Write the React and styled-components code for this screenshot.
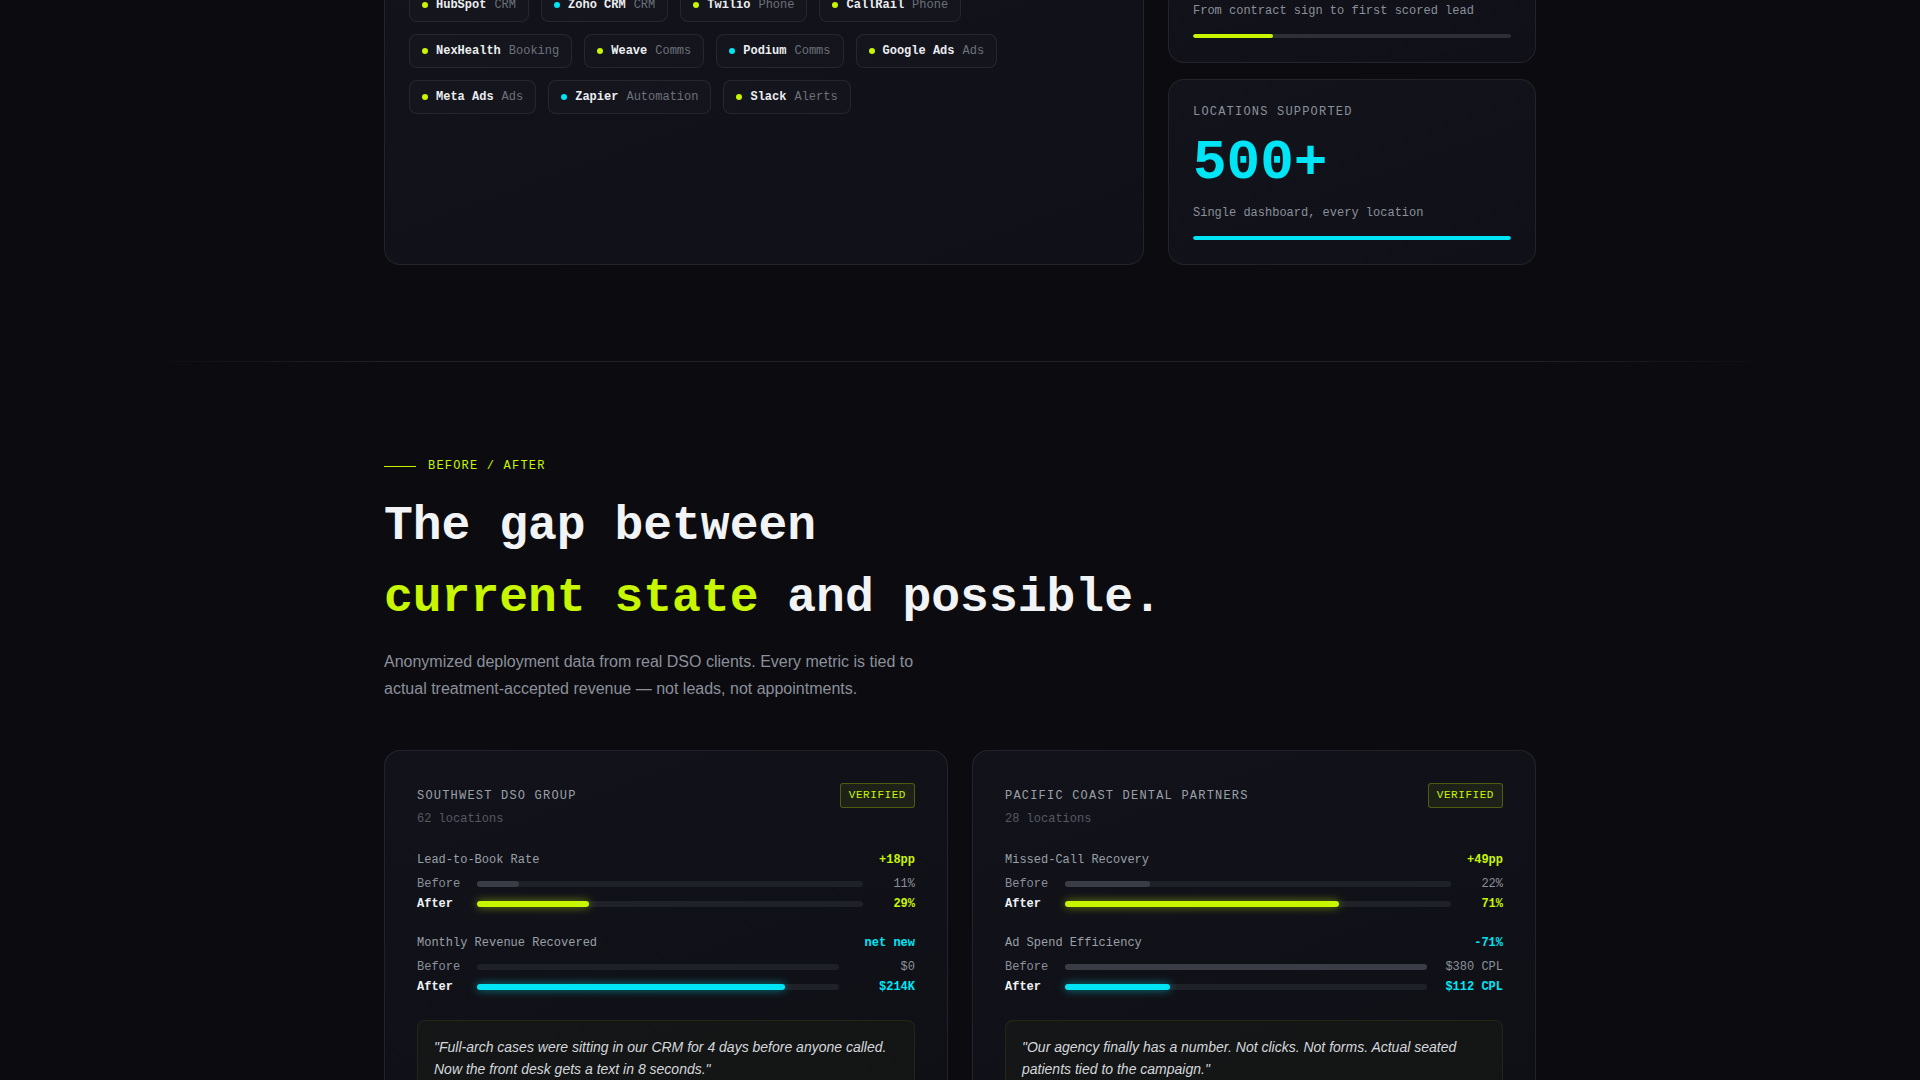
import React from "react";
import styled, { createGlobalStyle } from "styled-components";

const LIME = "#c8f500";
const CYAN = "#00e5f5";
const MONO = `"Liberation Mono", "DejaVu Sans Mono", monospace`;
const SANS = `"Liberation Sans", Arial, sans-serif`;

const tone = (t) => (t === "cyan" ? CYAN : LIME);

const GlobalStyle = createGlobalStyle`
  html, body {
    margin: 0;
    padding: 0;
    overflow: hidden;
    background: #0b0b10;
  }
  * { box-sizing: border-box; }
`;

const Page = styled.div`
  min-height: 100vh;
  background: #0b0b10;
  color: #e8eaee;
  font-family: ${MONO};
`;

const Section = styled.section`
  padding: ${(p) => p.$pad || "96px 0"};
  /* the capture is scrolled down the page: first section starts above the fold */
  margin-top: ${(p) => p.$offset || "0"};
`;

const Container = styled.div`
  max-width: 1152px;
  margin: 0 auto;
`;

/* ---------- integrations + stats ---------- */

const StackGrid = styled.div`
  display: grid;
  grid-template-columns: 1fr 368px;
  gap: 24px;
`;

const Panel = styled.div`
  background: linear-gradient(160deg, #12131b 0%, #101118 100%);
  border: 1px solid rgba(255, 255, 255, 0.08);
  border-radius: 16px;
  padding: 24px;
`;

const PanelLabel = styled.div`
  font-size: 12px;
  line-height: 16px;
  letter-spacing: 0.1em;
  text-transform: uppercase;
  color: #8b909a;
  margin-bottom: 12px;
`;

const PanelTitle = styled.h3`
  margin: 0 0 30px;
  font-size: 20px;
  line-height: 28px;
  color: #f0f2f5;
`;

const ChipList = styled.div`
  display: flex;
  flex-wrap: wrap;
  gap: 12px;
`;

const Chip = styled.div`
  display: flex;
  align-items: center;
  gap: 8px;
  padding: 7px 12px;
  border: 1px solid rgba(255, 255, 255, 0.08);
  border-radius: 8px;
  background: rgba(255, 255, 255, 0.015);
  font-size: 12px;
  line-height: 18px;
`;

const Dot = styled.span`
  width: 6px;
  height: 6px;
  border-radius: 50%;
  background: ${(p) => tone(p.$tone)};
`;

const ChipName = styled.span`
  font-weight: 700;
  color: #eceef1;
`;

const ChipKind = styled.span`
  color: #6c717a;
`;

const StatColumn = styled.div`
  display: flex;
  flex-direction: column;
  gap: 16px;
`;

const StatLabel = styled.div`
  font-size: 12px;
  line-height: 16px;
  letter-spacing: 0.1em;
  text-transform: uppercase;
  color: #8b909a;
  margin-bottom: 15px;
`;

const StatValue = styled.div`
  font-size: 56px;
  line-height: 1;
  font-weight: 700;
  color: ${(p) => tone(p.$tone)};
  margin-bottom: 14px;
`;

const StatNote = styled.div`
  font-size: 12px;
  line-height: 16px;
  color: #8b909a;
  margin-bottom: 15px;
`;

const Meter = styled.div`
  height: 4px;
  border-radius: 2px;
  background: rgba(255, 255, 255, 0.13);
  overflow: hidden;
`;

const MeterFill = styled.div`
  height: 100%;
  border-radius: 2px;
  background: ${(p) => tone(p.$tone)};
`;

/* ---------- divider ---------- */

const Divider = styled.div`
  max-width: 1640px;
  height: 1px;
  margin: 0 auto;
  background: linear-gradient(
    90deg,
    transparent 0%,
    rgba(255, 255, 255, 0.09) 15%,
    rgba(255, 255, 255, 0.09) 85%,
    transparent 100%
  );
`;

/* ---------- before / after ---------- */

const Eyebrow = styled.div`
  display: flex;
  align-items: center;
  gap: 12px;
  font-size: 12px;
  line-height: 14px;
  letter-spacing: 0.1em;
  text-transform: uppercase;
  color: ${LIME};
  margin-bottom: 17px;
`;

const EyebrowLine = styled.span`
  width: 32px;
  height: 1px;
  background: ${LIME};
`;

const Headline = styled.h2`
  margin: 0 0 14px;
  font-size: 48px;
  line-height: 72px;
  font-weight: 700;
  color: #f2f3f5;
`;

const Accent = styled.span`
  color: ${LIME};
`;

const Lead = styled.p`
  margin: 0 0 48px;
  max-width: 560px;
  font-family: ${SANS};
  font-size: 16px;
  line-height: 1.7;
  color: #8b909a;
`;

const CaseGrid = styled.div`
  display: grid;
  grid-template-columns: 1fr 1fr;
  gap: 24px;
`;

const CaseCard = styled.div`
  background: linear-gradient(160deg, #12131a 0%, #0f1016 100%);
  border: 1px solid rgba(255, 255, 255, 0.08);
  border-radius: 16px;
  padding: 32px;
`;

const CaseHeader = styled.div`
  display: flex;
  justify-content: space-between;
  align-items: center;
`;

const CaseName = styled.div`
  font-size: 12px;
  line-height: 18px;
  letter-spacing: 0.1em;
  text-transform: uppercase;
  color: #9ba0a8;
`;

const Badge = styled.span`
  padding: 4px 8px;
  font-size: 11px;
  line-height: 15px;
  letter-spacing: 0.05em;
  color: ${LIME};
  background: rgba(200, 245, 0, 0.07);
  border: 1px solid rgba(200, 245, 0, 0.28);
  border-radius: 3px;
`;

const CaseMeta = styled.div`
  margin-top: 2px;
  font-size: 12px;
  line-height: 18px;
  color: #545963;
`;

const Metrics = styled.div`
  display: flex;
  flex-direction: column;
  gap: 21px;
  margin-top: 23px;
`;

const MetricHead = styled.div`
  display: flex;
  justify-content: space-between;
  font-size: 12px;
  line-height: 18px;
  margin-bottom: 6px;
`;

const MetricName = styled.span`
  color: #9ba0a8;
`;

const MetricDelta = styled.span`
  font-weight: 700;
  color: ${(p) => tone(p.$tone)};
`;

const Rows = styled.div`
  display: flex;
  flex-direction: column;
  gap: 2px;
`;

const BarRow = styled.div`
  display: grid;
  grid-template-columns: 48px 1fr ${(p) => p.$valueWidth}px;
  gap: 12px;
  align-items: center;
  font-size: 12px;
  line-height: 18px;
`;

const RowLabel = styled.span`
  color: ${(p) => (p.$strong ? "#f0f2f5" : "#8b909a")};
  font-weight: ${(p) => (p.$strong ? 700 : 400)};
`;

const Track = styled.div`
  height: 6px;
  border-radius: 3px;
  background: #1f2128;
`;

const Fill = styled.div`
  height: 100%;
  border-radius: 3px;
  background: ${(p) => (p.$tone ? tone(p.$tone) : "#3a3d45")};
  box-shadow: ${(p) =>
    p.$tone === "cyan"
      ? "0 0 8px rgba(0, 229, 245, 0.55)"
      : p.$tone
      ? "0 0 8px rgba(200, 245, 0, 0.55)"
      : "none"};
`;

const RowValue = styled.span`
  text-align: right;
  white-space: nowrap;
  color: ${(p) => (p.$tone ? tone(p.$tone) : "#8b909a")};
  font-weight: ${(p) => (p.$tone ? 700 : 400)};
`;

const Quote = styled.blockquote`
  margin: 24px 0 0;
  padding: 16px 16px;
  background: rgba(200, 245, 0, 0.025);
  border: 1px solid rgba(200, 245, 0, 0.08);
  border-radius: 8px;
  font-family: ${SANS};
  font-style: italic;
  font-size: 14px;
  line-height: 1.55;
  color: #d4d7dc;
`;

const integrations = [
  ["HubSpot", "CRM", "lime"],
  ["Zoho CRM", "CRM", "cyan"],
  ["Twilio", "Phone", "lime"],
  ["CallRail", "Phone", "lime"],
  ["NexHealth", "Booking", "lime"],
  ["Weave", "Comms", "lime"],
  ["Podium", "Comms", "cyan"],
  ["Google Ads", "Ads", "lime"],
  ["Meta Ads", "Ads", "lime"],
  ["Zapier", "Automation", "cyan"],
  ["Slack", "Alerts", "lime"],
];

const stats = [
  {
    label: "Time to first lead",
    value: "14 days",
    note: "From contract sign to first scored lead",
    fill: 25,
    tone: "lime",
  },
  {
    label: "Locations supported",
    value: "500+",
    note: "Single dashboard, every location",
    fill: 100,
    tone: "cyan",
  },
];

const cases = [
  {
    name: "Southwest DSO Group",
    meta: "62 locations",
    quote:
      "\"Full-arch cases were sitting in our CRM for 4 days before anyone called. Now the front desk gets a text in 8 seconds.\"",
    metrics: [
      {
        name: "Lead-to-Book Rate",
        delta: "+18pp",
        tone: "lime",
        valueWidth: 40,
        before: { value: "11%", fill: 11 },
        after: { value: "29%", fill: 29 },
      },
      {
        name: "Monthly Revenue Recovered",
        delta: "net new",
        tone: "cyan",
        valueWidth: 64,
        before: { value: "$0", fill: 0 },
        after: { value: "$214K", fill: 85 },
      },
    ],
  },
  {
    name: "Pacific Coast Dental Partners",
    meta: "28 locations",
    quote:
      "\"Our agency finally has a number. Not clicks. Not forms. Actual seated patients tied to the campaign.\"",
    metrics: [
      {
        name: "Missed-Call Recovery",
        delta: "+49pp",
        tone: "lime",
        valueWidth: 40,
        before: { value: "22%", fill: 22 },
        after: { value: "71%", fill: 71 },
      },
      {
        name: "Ad Spend Efficiency",
        delta: "-71%",
        tone: "cyan",
        valueWidth: 64,
        before: { value: "$380 CPL", fill: 100 },
        after: { value: "$112 CPL", fill: 29 },
      },
    ],
  },
];

const Metric = ({ m }) => (
  <div>
    <MetricHead>
      <MetricName>{m.name}</MetricName>
      <MetricDelta $tone={m.tone}>{m.delta}</MetricDelta>
    </MetricHead>
    <Rows>
      <BarRow $valueWidth={m.valueWidth}>
        <RowLabel>Before</RowLabel>
        <Track>
          <Fill style={{ width: `${m.before.fill}%` }} />
        </Track>
        <RowValue>{m.before.value}</RowValue>
      </BarRow>
      <BarRow $valueWidth={m.valueWidth}>
        <RowLabel $strong>After</RowLabel>
        <Track>
          <Fill $tone={m.tone} style={{ width: `${m.after.fill}%` }} />
        </Track>
        <RowValue $tone={m.tone}>{m.after.value}</RowValue>
      </BarRow>
    </Rows>
  </div>
);

const App = () => {
  return (
    <Page>
      <GlobalStyle />

      <Section $pad="0 0 96px" $offset="-123px">
        <Container>
          <StackGrid>
            <Panel>
              <PanelLabel>Integrations</PanelLabel>
              <PanelTitle>Plugs into the stack you already run.</PanelTitle>
              <ChipList>
                {integrations.map(([name, kind, t]) => (
                  <Chip key={name}>
                    <Dot $tone={t} />
                    <ChipName>{name}</ChipName>
                    <ChipKind>{kind}</ChipKind>
                  </Chip>
                ))}
              </ChipList>
            </Panel>

            <StatColumn>
              {stats.map((s) => (
                <Panel key={s.label}>
                  <StatLabel>{s.label}</StatLabel>
                  <StatValue $tone={s.tone}>{s.value}</StatValue>
                  <StatNote>{s.note}</StatNote>
                  <Meter>
                    <MeterFill $tone={s.tone} style={{ width: `${s.fill}%` }} />
                  </Meter>
                </Panel>
              ))}
            </StatColumn>
          </StackGrid>
        </Container>
      </Section>

      <Divider />

      <Section $pad="97px 0 96px">
        <Container>
          <Eyebrow>
            <EyebrowLine />
            Before / After
          </Eyebrow>
          <Headline>
            The gap between
            <br />
            <Accent>current state</Accent> and possible.
          </Headline>
          <Lead>
            Anonymized deployment data from real DSO clients. Every metric is
            tied to actual treatment-accepted revenue — not leads, not
            appointments.
          </Lead>

          <CaseGrid>
            {cases.map((c) => (
              <CaseCard key={c.name}>
                <CaseHeader>
                  <CaseName>{c.name}</CaseName>
                  <Badge>VERIFIED</Badge>
                </CaseHeader>
                <CaseMeta>{c.meta}</CaseMeta>
                <Metrics>
                  {c.metrics.map((m) => (
                    <Metric key={m.name} m={m} />
                  ))}
                </Metrics>
                <Quote>{c.quote}</Quote>
              </CaseCard>
            ))}
          </CaseGrid>
        </Container>
      </Section>
    </Page>
  );
};

export default App;
